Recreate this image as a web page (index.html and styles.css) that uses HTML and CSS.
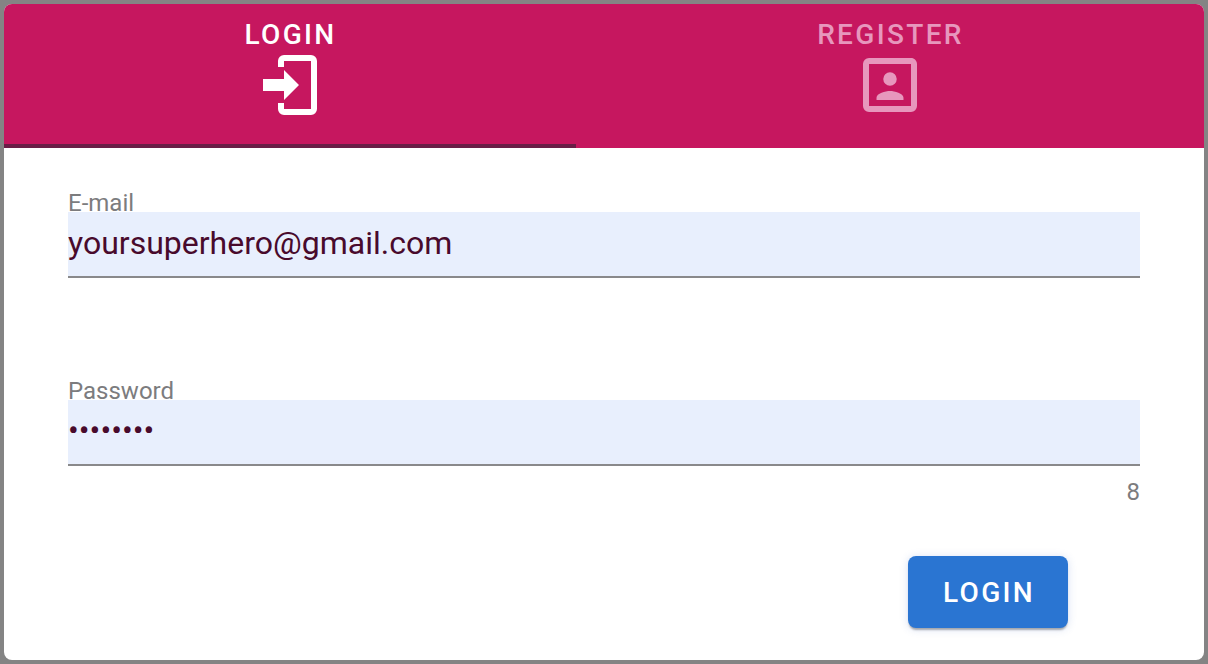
FILE: index.html
```html
<!DOCTYPE html>
<html lang="en">
<head>
<meta charset="utf-8">
<title>Login</title>
<link rel="stylesheet" href="styles.css">
</head>
<body>
<main class="card">
  <nav class="tabs">
    <a class="tab tab-login active">
      <span>LOGIN</span>
      <svg class="icon" viewBox="0 0 24 24"><path d="M10,17V14H3V10H10V7L15,12L10,17M10,2H19A2,2 0 0,1 21,4V20A2,2 0 0,1 19,22H10A2,2 0 0,1 8,20V18H10V20H19V4H10V6H8V4A2,2 0 0,1 10,2Z"/></svg>
    </a>
    <a class="tab tab-register">
      <span>REGISTER</span>
      <svg class="icon" viewBox="0 0 24 24"><path d="M19,19H5V5H19M19,3H5A2,2 0 0,0 3,5V19A2,2 0 0,0 5,21H19A2,2 0 0,0 21,19V5C21,3.89 20.1,3 19,3M16.5,16.25C16.5,14.75 13.5,14 12,14C10.5,14 7.5,14.75 7.5,16.25V17H16.5M12,12.25A2.25,2.25 0 0,0 14.25,10A2.25,2.25 0 0,0 12,7.75A2.25,2.25 0 0,0 9.75,10A2.25,2.25 0 0,0 12,12.25Z"/></svg>
    </a>
  </nav>
  <form class="form">
    <div class="field">
      <label class="label" for="email">E-mail</label>
      <input class="input" id="email" type="email" value="yoursuperhero@gmail.com">
    </div>
    <div class="field field-password">
      <label class="label" for="password">Password</label>
      <input class="input" id="password" type="password" value="12345678">
      <div class="counter">8</div>
    </div>
    <div class="actions"><button class="button" type="button">LOGIN</button></div>
  </form>
</main>
</body>
</html>
```

FILE: styles.css
```css
* { box-sizing: border-box; }

body {
  margin: 0;
  height: 664px;
  padding: 4px;
  overflow: hidden;
  background: #848484;
  font-family: Roboto, sans-serif;
}

.card {
  height: 656px;
  border-radius: 8px;
  overflow: hidden;
  background: #fff;
}

.tabs {
  display: flex;
  height: 144px;
  background: #c6175f;
}

.tab {
  display: flex;
  flex-direction: column;
  align-items: center;
  padding: 16px 0 0 1px;
  color: #fff;
  font-size: 28px;
  font-weight: 500;
  line-height: 30px;
  letter-spacing: 2.35px;
}

.tab-login { width: 572px; }
.tab-register { flex: 1; color: #e797bd; }
.active { border-bottom: 4px solid #6a1d46; }

.icon {
  width: 72px;
  height: 72px;
  margin: -1px 1px 0 0;
  flex: none;
  fill: currentColor;
}

.form { padding: 40px 64px 0; }

.field {
  display: flex;
  flex-direction: column;
}

.field-password { margin-top: 98px; }

.label {
  height: 24px;
  color: #7c7c7e;
  font-size: 24px;
  line-height: 30px;
}

.input {
  width: 100%;
  height: 66px;
  padding: 0 0 2px;
  border: 0;
  border-bottom: 2px solid #89898b;
  border-radius: 0;
  outline: 0;
  background: #e8effd;
  color: #480a2c;
  font-family: inherit;
  font-size: 32px;
}

#password { padding-bottom: 4px; }

.counter {
  margin-top: 12px;
  color: #7c7c7e;
  font-size: 24px;
  line-height: 28px;
  text-align: right;
}

.actions {
  display: flex;
  justify-content: flex-end;
  padding: 50px 72px 0 0;
}

.button {
  width: 160px;
  height: 72px;
  padding: 0 0 0 2px;
  border: 0;
  border-radius: 8px;
  background: #2a75d2;
  box-shadow: 0 3px 2px -1px rgba(0, 0, 0, .3), 0 1px 8px rgba(70, 110, 200, .22);
  color: #fff;
  font-family: inherit;
  font-size: 28px;
  font-weight: 500;
  letter-spacing: 2.35px;
}
```
